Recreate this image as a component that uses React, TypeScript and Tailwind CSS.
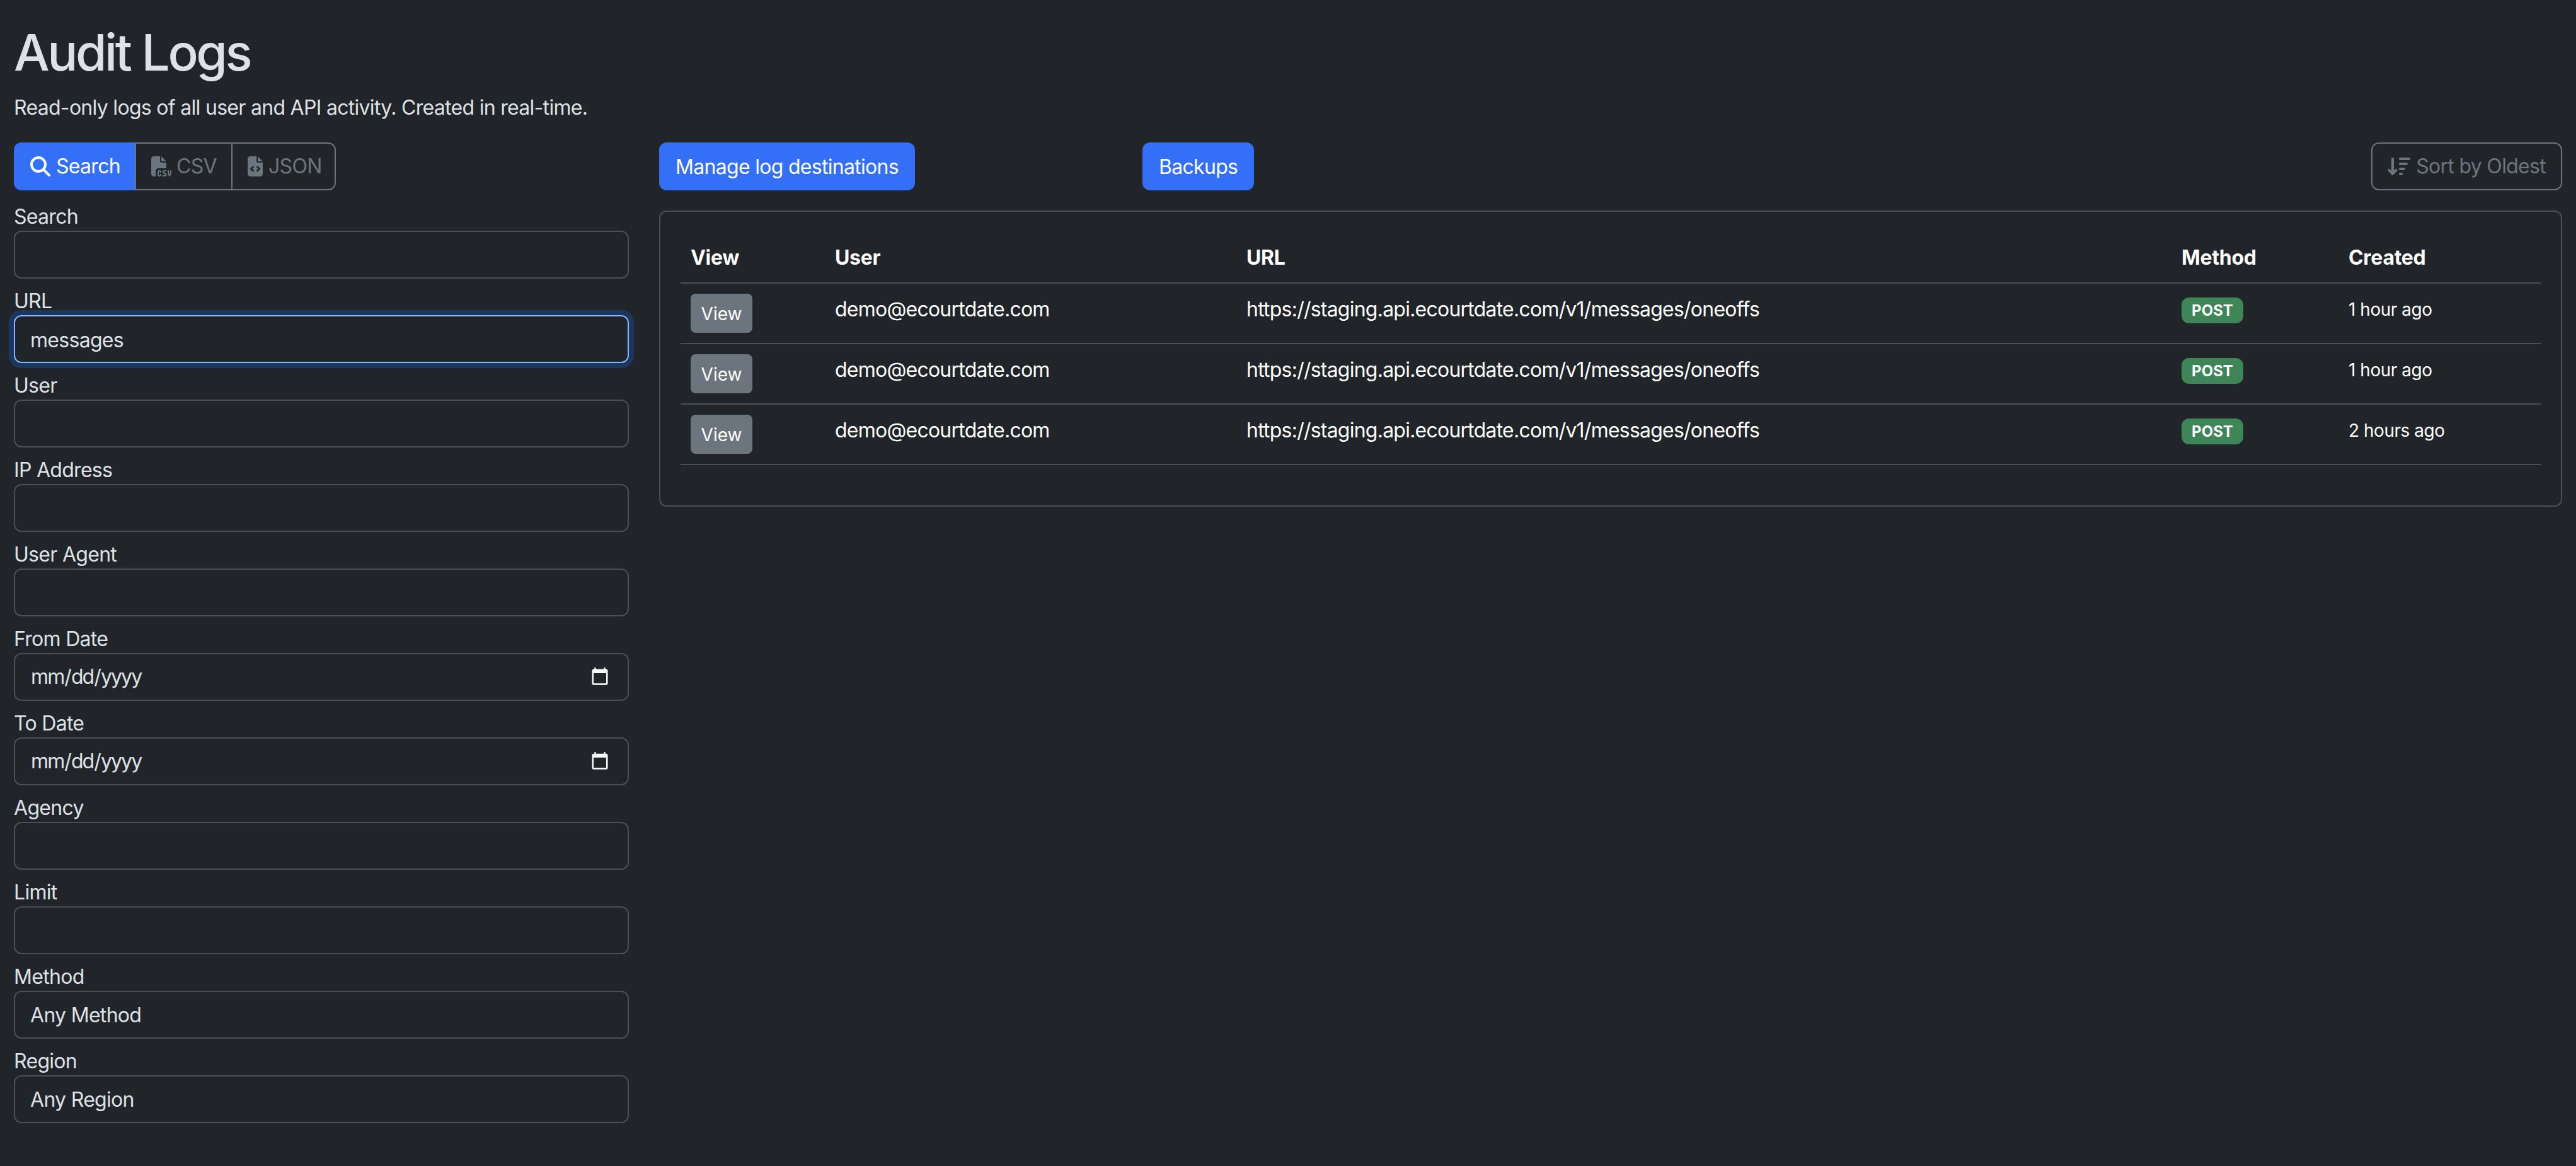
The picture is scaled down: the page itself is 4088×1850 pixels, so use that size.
import { FaArrowDownWideShort, FaFileCode, FaFileCsv, FaMagnifyingGlass } from "react-icons/fa6";

const fields = [
  { label: "Search", type: "text", value: "" },
  { label: "URL", type: "text", value: "messages", focused: true },
  { label: "User", type: "text", value: "" },
  { label: "IP Address", type: "text", value: "" },
  { label: "User Agent", type: "text", value: "" },
  { label: "From Date", type: "date", value: "" },
  { label: "To Date", type: "date", value: "" },
  { label: "Agency", type: "text", value: "" },
  { label: "Limit", type: "text", value: "" },
];

const selects = [
  { label: "Method", option: "Any Method" },
  { label: "Region", option: "Any Region" },
];

const logs = [
  { user: "demo@ecourtdate.com", url: "https://staging.api.ecourtdate.com/v1/messages/oneoffs", method: "POST", created: "1 hour ago" },
  { user: "demo@ecourtdate.com", url: "https://staging.api.ecourtdate.com/v1/messages/oneoffs", method: "POST", created: "1 hour ago" },
  { user: "demo@ecourtdate.com", url: "https://staging.api.ecourtdate.com/v1/messages/oneoffs", method: "POST", created: "2 hours ago" },
];

const inputClass =
  "block h-[76px] w-full rounded-xl border-2 bg-transparent px-[24px] text-[32px] text-[#dee2e6] outline-none [color-scheme:dark]";

function FieldLabel({ text }: { text: string }) {
  return <label className="block h-[48px] pt-[2px] text-[#dee2e6]">{text}</label>;
}

function SideFilters() {
  return (
    <aside className="w-[976px] shrink-0">
      <div className="mb-[16px] flex h-[76px] w-[511px] text-[#6c757d]">
        <button className="flex w-[192px] items-center gap-[9px] rounded-l-xl bg-[#3370f7] pl-[26px] text-white">
          <FaMagnifyingGlass className="h-[32px] w-[32px]" />
          Search
        </button>
        <button className="flex w-[153px] items-center gap-[8px] border-y-2 border-l-2 border-[#6c757d] pl-[24px]">
          <FaFileCsv className="h-[32px] w-[32px]" />
          CSV
        </button>
        <button className="flex w-[166px] items-center gap-[9px] rounded-r-xl border-2 border-[#6c757d] pl-[24px]">
          <FaFileCode className="h-[32px] w-[24px]" />
          JSON
        </button>
      </div>

      <form>
        {fields.map((field) => (
          <div key={field.label} className="mb-[10px]">
            <FieldLabel text={field.label} />
            <input
              type={field.type}
              defaultValue={field.value}
              className={
                field.focused
                  ? `${inputClass} border-[#86b7fe] pt-[2px] shadow-[0_0_0_8px_rgba(13,110,253,0.25)]`
                  : field.type === "date"
                    ? `${inputClass} border-[#495057] pr-[26px] tracking-[-1.9px]`
                    : `${inputClass} border-[#495057]`
              }
            />
          </div>
        ))}
        {selects.map((select) => (
          <div key={select.label} className="mb-[10px]">
            <FieldLabel text={select.label} />
            <select className={`${inputClass} appearance-none border-[#495057] pt-[2px]`}>
              <option>{select.option}</option>
            </select>
          </div>
        ))}
      </form>
    </aside>
  );
}

function LogsTable() {
  return (
    <div className="rounded-xl border-2 border-[#495057] p-[32px]">
      <table className="mb-[32px] w-full table-fixed border-collapse text-left text-white">
        <colgroup>
          <col className="w-[229px]" />
          <col className="w-[653px]" />
          <col className="w-[1484px]" />
          <col className="w-[265px]" />
          <col />
        </colgroup>
        <thead>
          <tr className="border-b-2 border-[#495057]">
            {["View", "User", "URL", "Method", "Created"].map((title) => (
              <th key={title} className="px-[16px] pt-[17px] pb-[15px] align-top font-bold tracking-[-0.3px]">
                {title}
              </th>
            ))}
          </tr>
        </thead>
        <tbody>
          {logs.map((log, i) => (
            <tr key={i} className="border-b-2 border-[#495057]">
              <td className="p-[16px] align-top">
                <button className="block h-[62px] w-[98px] rounded-lg bg-[#6c757d] pt-[2px] text-[28px] tracking-normal">View</button>
              </td>
              <td className="px-[16px] pt-[17px] pb-[16px] align-top tracking-[-0.77px]">{log.user}</td>
              <td className="px-[16px] pt-[17px] pb-[16px] align-top tracking-[-0.77px]">{log.url}</td>
              <td className="p-[16px] align-top">
                <span className="mt-[6px] block w-[98px] rounded-xl bg-[#3e8558] py-[8px] text-center text-[24px]/[25px] font-bold tracking-normal">
                  {log.method}
                </span>
              </td>
              <td className="px-[16px] pt-[17px] pb-[16px] align-top text-[28px] tracking-[-0.47px]">{log.created}</td>
            </tr>
          ))}
        </tbody>
      </table>
    </div>
  );
}

export default function App() {
  return (
    <main className="min-h-screen bg-[#212529] px-[22px] pt-[35px] font-[Inter,sans-serif] text-[32px]/[48px] tracking-[-0.7px] text-[#dee2e6]">
      <h1 className="mb-[16px] text-[80px]/[96px] font-medium tracking-[-3.4px]">Audit Logs</h1>
      <p className="mb-[31px]">Read-only logs of all user and API activity. Created in real-time.</p>

      <div className="flex gap-[48px]">
        <SideFilters />

        <section className="min-w-0 flex-1">
          <div className="mb-[32px] grid grid-cols-[767px_1fr_auto]">
            <div>
              <button className="h-[76px] rounded-xl bg-[#3370f7] px-[26px] pt-[2px] text-white">Manage log destinations</button>
            </div>
            <div>
              <button className="h-[76px] rounded-xl bg-[#3370f7] px-[26px] pt-[2px] text-white">Backups</button>
            </div>
            <button className="flex h-[76px] items-center gap-[9px] rounded-xl border-2 border-[#6c757d] px-[24px] text-[#6c757d]">
              <FaArrowDownWideShort className="h-[32px] w-[36px]" />
              Sort by Oldest
            </button>
          </div>
          <LogsTable />
        </section>
      </div>
    </main>
  );
}
